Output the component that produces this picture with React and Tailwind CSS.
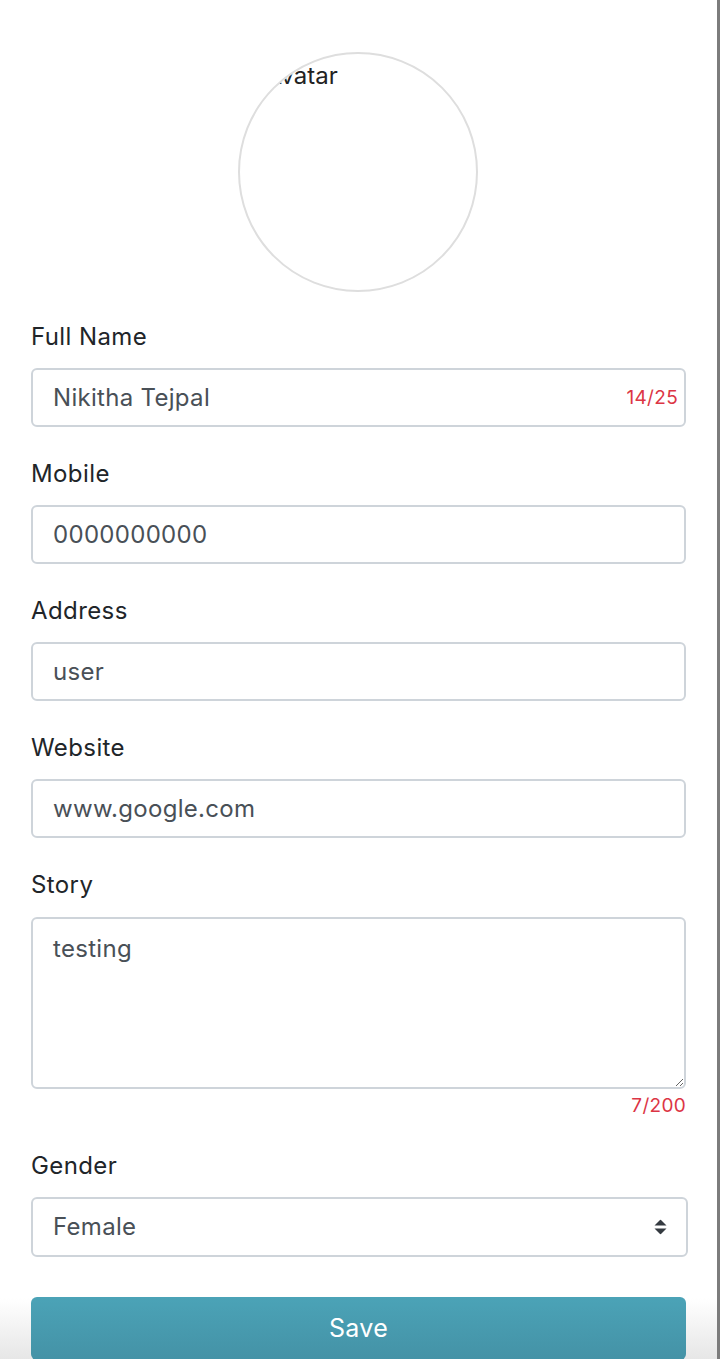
import React from 'react';

const font = { fontFamily: 'Inter, "Liberation Sans", sans-serif' };

function Field({ label, value, counter }) {
  return (
    <div className="mb-[30px]">
      <label className="block text-[24px] leading-[33px] tracking-[0.4px] text-[#212529] mb-[15px]">{label}</label>
      <div className="relative">
        <input
          defaultValue={value}
          readOnly
          className="w-full h-[59px] px-[20px] text-[24px] tracking-[0.3px] text-[#495057] bg-white border-2 border-[#ced4da] rounded-md outline-none"
        />
        {counter && (
          <span className="absolute right-[8px] top-1/2 -translate-y-1/2 text-[19px] tracking-[0.3px] text-[#dc3545]">{counter}</span>
        )}
      </div>
    </div>
  );
}

export default function App() {
  return (
    <div className="min-h-[1359px] bg-white flex" style={font}>
      <div className="flex-1 flex flex-col">
        <div className="flex justify-center pt-[52px] pb-[28px] pr-[2px]">
          <div className="w-[240px] h-[240px] rounded-full border-2 border-[#dedede] overflow-hidden pt-[5px] pl-[26px]">
            <span className="text-[24px] leading-[33px] text-[#222]">Avatar</span>
          </div>
        </div>

        <form className="pl-[31px] pr-[31px]">
          <Field label="Full Name" value="Nikitha Tejpal" counter="14/25" />
          <Field label="Mobile" value="0000000000" />
          <Field label="Address" value="user" />
          <Field label="Website" value="www.google.com" />

          <div>
            <label className="block text-[24px] leading-[33px] tracking-[0.4px] text-[#212529] mb-[16px]">Story</label>
            <textarea
              defaultValue="testing"
              readOnly
              className="block w-full h-[172px] px-[20px] py-[13px] text-[24px] leading-[33px] tracking-[0.3px] text-[#495057] bg-white border-2 border-[#ced4da] rounded-md outline-none resize-y"
            />
            <div className="text-right text-[19px] leading-[34px] tracking-[0.3px] text-[#dc3545]">7/200</div>
          </div>

          <div className="mt-[26px]">
            <label className="block text-[24px] leading-[33px] tracking-[0.4px] text-[#212529] mb-[15px]">Gender</label>
            <div className="relative mr-[-2px]">
              <select
                defaultValue="Female"
                className="w-full h-[60px] pl-[20px] text-[24px] tracking-[0.3px] text-[#495057] bg-white border-2 border-[#ced4da] rounded-md appearance-none outline-none"
              >
                <option>Female</option>
                <option>Male</option>
              </select>
              <svg className="absolute right-[21px] top-1/2 -translate-y-1/2 pointer-events-none" width="13" height="15" viewBox="0 0 13 15">
                <path d="M6.5 0 L12.5 6 L0.5 6 Z" fill="#343a40" />
                <path d="M6.5 15 L12.5 9 L0.5 9 Z" fill="#343a40" />
              </svg>
            </div>
          </div>
        </form>

        <div className="mt-auto pt-[40px] pl-[31px] pr-[31px] bg-gradient-to-b from-white from-40% to-[#e6e6e6]">
          <button className="w-full h-[63px] rounded-md bg-gradient-to-b from-[#4ba3b7] to-[#4492a6] text-white text-[25px] tracking-[0.3px]">
            Save
          </button>
        </div>
      </div>
      <div className="w-[3px] bg-[#7c7c7c]" />
    </div>
  );
}
